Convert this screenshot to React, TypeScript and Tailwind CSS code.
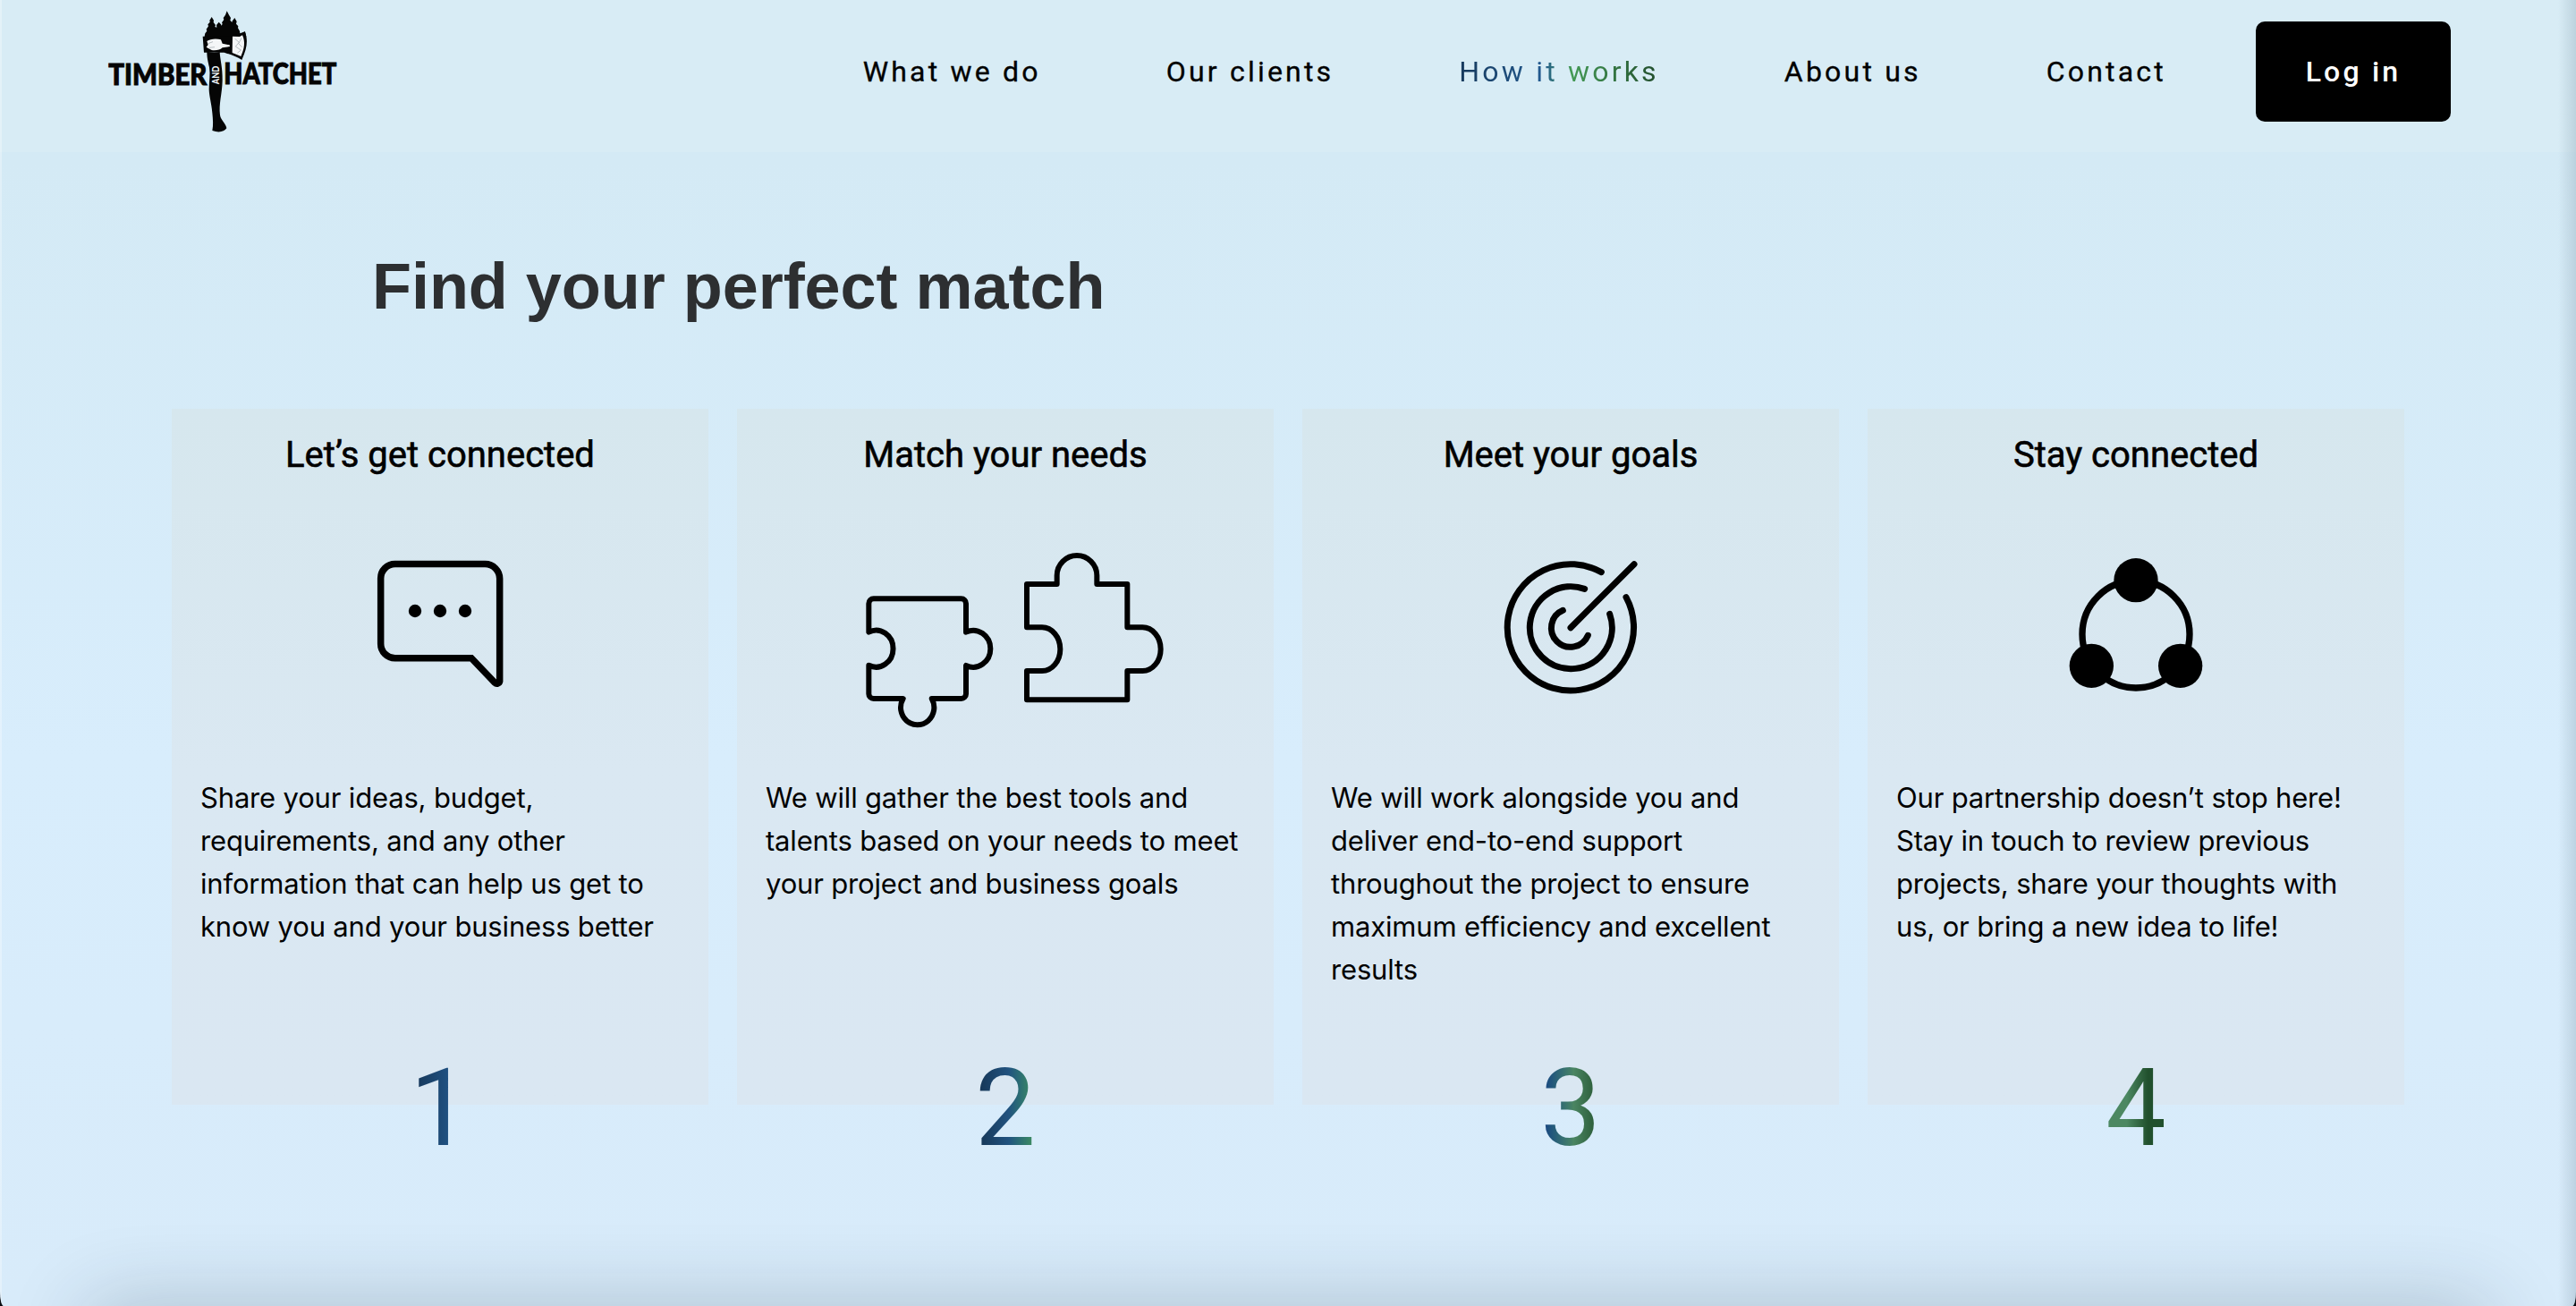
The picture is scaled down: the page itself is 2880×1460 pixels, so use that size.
import type { ReactNode } from "react";

function Logo() {
  return (
    <svg className="h-40 w-[300px] shrink-0" viewBox="0 0 900 480" role="img" aria-label="Timber and Hatchet">
      <g fontFamily="Lato, sans-serif" fontWeight="900" fontSize="95" fill="#050505" stroke="#050505" strokeWidth="3">
        <text x="64" y="285" textLength="330" lengthAdjust="spacingAndGlyphs">TIMBER</text>
        <text x="451" y="283" textLength="378" lengthAdjust="spacingAndGlyphs">HATCHET</text>
      </g>
      {/* trees */}
      <path
        fill="#050505"
        d="M384 132 388 112 394 104 392 98 399 88 397 82 404 74 403 68 410 57 417 68 416 75 423 84 421 90 427 92 426 84 434 74 441 82 443 86 446 80 444 76 451 66 449 60 456 50 461 37 468 50 474 60 472 68 479 76 478 72 487 60 494 72 492 80 499 88 498 94 504 104 505 112 522 106 526 124 520 130 480 146 384 140Z"
      />
      {/* axe head */}
      <path fill="#050505" d="M380 122H470L484 118 508 114 521 106C532 132 530 160 511 201 494 190 476 184 452 176L384 176Z" />
      <path
        fill="#f4f6f7"
        d="M394 138C404 130 426 128 441 133L446 146 470 151 471 156 446 160C440 167 424 170 410 168L400 163 392 158 398 150Z"
      />
      <path fill="#f4f6f7" d="M480 122 504 123 513 118C523 140 520 162 508 189L494 183 479 177Z" />
      <path fill="none" stroke="#9aa3a8" strokeWidth="2" d="M488 130 502 142 490 156 508 168 496 178M510 128 500 146 512 158M398 146 414 140M402 160 420 158" />
      {/* handle */}
      <path
        fill="#050505"
        d="M394 172C408 178 424 178 437 174C438 200 447 226 446 270C445 316 433 348 438 386C441 404 458 414 460 430C452 442 434 446 412 438C416 420 414 400 412 378C409 345 402 325 401 300C401 275 406 250 402 226C398 206 394 196 394 172Z"
      />
      <text
        transform="translate(435 283) rotate(-90)"
        fontFamily="Lato, sans-serif"
        fontWeight="900"
        fontSize="32"
        fill="#eef4f7"
        textLength="62"
        lengthAdjust="spacingAndGlyphs"
      >
        AND
      </text>
    </svg>
  );
}

function ChatIcon() {
  return (
    <svg className="h-60 w-[200px]" viewBox="-24 0 600 720" fill="none" stroke="#000" strokeWidth="22.5">
      <path d="M125 91.500H427A49 49 0 0 1 476 140.500V484A9.500 9.500 0 0 1 460 490L381 407H125A48 48 0 0 1 77 359V140A48 48 0 0 1 125 91.500Z" />
      <g fill="#000" stroke="none">
        <circle cx="192" cy="249" r="21.500" />
        <circle cx="276" cy="249" r="21.500" />
        <circle cx="360" cy="249" r="21.500" />
      </g>
    </svg>
  );
}

function PuzzleIcon() {
  return (
    <svg
      className="h-60 w-[400px]"
      viewBox="-48 0 1200 720"
      fill="none"
      stroke="#000"
      strokeWidth="18"
      strokeLinejoin="round"
    >
      <path d="M94 320V224A16 16 0 0 1 110 208H404A16 16 0 0 1 420 224V320A58 61.500 0 1 1 420 432V527A16 16 0 0 1 404 543H305A56 58 0 1 1 209 543H110A16 16 0 0 1 94 527V431A57 61.500 0 1 0 94 320Z" />
      <path d="M624 159H725V130A67 67 0 0 1 859 130V159H961V304H1012A61 73 0 0 1 1012 450H961V547H624V450H675A61 73 0 0 0 675 304H624Z" />
    </svg>
  );
}

function TargetIcon() {
  return (
    <svg
      className="h-60 w-[200px]"
      viewBox="-12 0 600 720"
      fill="none"
      stroke="#000"
      strokeWidth="21"
      strokeLinecap="round"
    >
      <path d="M391 119A212 212 0 1 0 474 203" />
      <path d="M335 175A138 138 0 1 0 419 259" />
      <path d="M262 247A64 64 0 1 0 346 331" />
      <path d="M288 305 501 92" />
    </svg>
  );
}

function NetworkIcon() {
  return (
    <svg className="h-60 w-[200px]" viewBox="-6 0 600 720">
      <circle cx="294" cy="327" r="180" fill="none" stroke="#000" strokeWidth="22" />
      <circle cx="294" cy="146" r="74" />
      <circle cx="145" cy="433" r="74" />
      <circle cx="443" cy="433" r="74" />
    </svg>
  );
}

type Step = { title: string; icon: ReactNode; lines: string[]; tint: string };

const steps: Step[] = [
  {
    title: "Let’s get connected",
    icon: <ChatIcon />,
    lines: [
      "Share your ideas, budget,",
      "requirements, and any other",
      "information that can help us get to",
      "know you and your business better",
    ],
    tint: "from-[#16385a] from-10% to-[#215486] to-70%",
  },
  {
    title: "Match your needs",
    icon: <PuzzleIcon />,
    lines: ["We will gather the best tools and", "talents based on your needs to meet", "your project and business goals"],
    tint: "from-[#17395a] from-10% via-[#21527f] via-55% to-[#43925a]",
  },
  {
    title: "Meet your goals",
    icon: <TargetIcon />,
    lines: [
      "We will work alongside you and",
      "deliver end-to-end support",
      "throughout the project to ensure",
      "maximum efficiency and excellent",
      "results",
    ],
    tint: "from-[#1b4a80] from-10% via-[#4a8562] via-55% to-[#24532f]",
  },
  {
    title: "Stay connected",
    icon: <NetworkIcon />,
    lines: [
      "Our partnership doesn’t stop here!",
      "Stay in touch to review previous",
      "projects, share your thoughts with",
      "us, or bring a new idea to life!",
    ],
    tint: "from-[#4c8862] from-35% to-[#21502d] to-70%",
  },
];

function Card({ step, index }: { step: Step; index: number }) {
  return (
    <article className="flex h-[778px] w-[600px] flex-col items-center bg-linear-to-b from-[#d6e7ee] via-[#dae8f2] via-52% to-[#dae7f2] pt-7">
      <h2 className="shrink-0 text-[40px] leading-[48px] font-normal [-webkit-text-stroke:0.6px_#000]">{step.title}</h2>
      <div className="mt-[67px] shrink-0">{step.icon}</div>
      <p className="mt-7 h-60 w-[536px] shrink-0 font-['Inter',sans-serif] text-[31px] leading-[48px] tracking-[-0.17px] whitespace-nowrap">
        {step.lines.map((line) => (
          <span key={line} className="block">
            {line}
          </span>
        ))}
      </p>
      <span
        className={`mt-[71px] shrink-0 bg-linear-to-r bg-clip-text text-[120px] leading-[120px] text-transparent ${step.tint}`}
      >
        {index + 1}
      </span>
    </article>
  );
}

export default function App() {
  return (
    <div className="h-[1460px] w-[2880px] bg-[#0b0d12]">
      <div className="relative flex h-full flex-col overflow-hidden bg-linear-to-b from-[#d4eaf5] from-12% via-[#d8edfc] via-58% to-[#d8ebfa] font-['Roboto',sans-serif] text-black [border-radius:0_0_4px_4px/0_0_16px_16px]">
        <header className="flex h-[170px] shrink-0 items-start justify-between bg-[#d8ecf5] pr-[140px] pl-[100px]">
          <Logo />
          <nav className="flex items-center gap-[140px] pt-6 text-[32px] leading-[38px] tracking-[3.2px] whitespace-nowrap">
            <a className="[-webkit-text-stroke:0.3px_#000]">What we do</a>
            <a className="[-webkit-text-stroke:0.3px_#000]">Our clients</a>
            <a className="bg-clip-text text-transparent [background-image:linear-gradient(90deg,#17395c,#225a90_42%,#449a55_56%,#224d2d)]">
              How it works
            </a>
            <a className="[-webkit-text-stroke:0.3px_#000]">About us</a>
            <a className="[-webkit-text-stroke:0.3px_#000]">Contact</a>
            <a className="-ml-10 flex h-28 w-[218px] items-center justify-center rounded-[10px] bg-black font-medium text-white">
              Log in
            </a>
          </nav>
        </header>
        <main className="flex flex-col pt-[114px]">
          <h1 className="ml-[416px] font-['Liberation_Sans',sans-serif] text-[72px] leading-[72px] font-bold tracking-[-0.03px] text-[#2d2f31]">
            Find your perfect match
          </h1>
          <section className="mt-[101px] flex gap-8 px-48">
            {steps.map((step, i) => (
              <Card key={step.title} step={step} index={i} />
            ))}
          </section>
        </main>
        <div className="pointer-events-none absolute inset-y-0 right-0 w-5 bg-linear-to-r from-transparent to-[#8ba3b3]/35" />
        <div className="pointer-events-none absolute inset-y-0 left-0 w-0.5 bg-white/30" />
        <div className="pointer-events-none absolute inset-x-[100px] top-full h-20 shadow-[0_0_90px_rgba(20,40,60,0.24)]" />
      </div>
    </div>
  );
}
